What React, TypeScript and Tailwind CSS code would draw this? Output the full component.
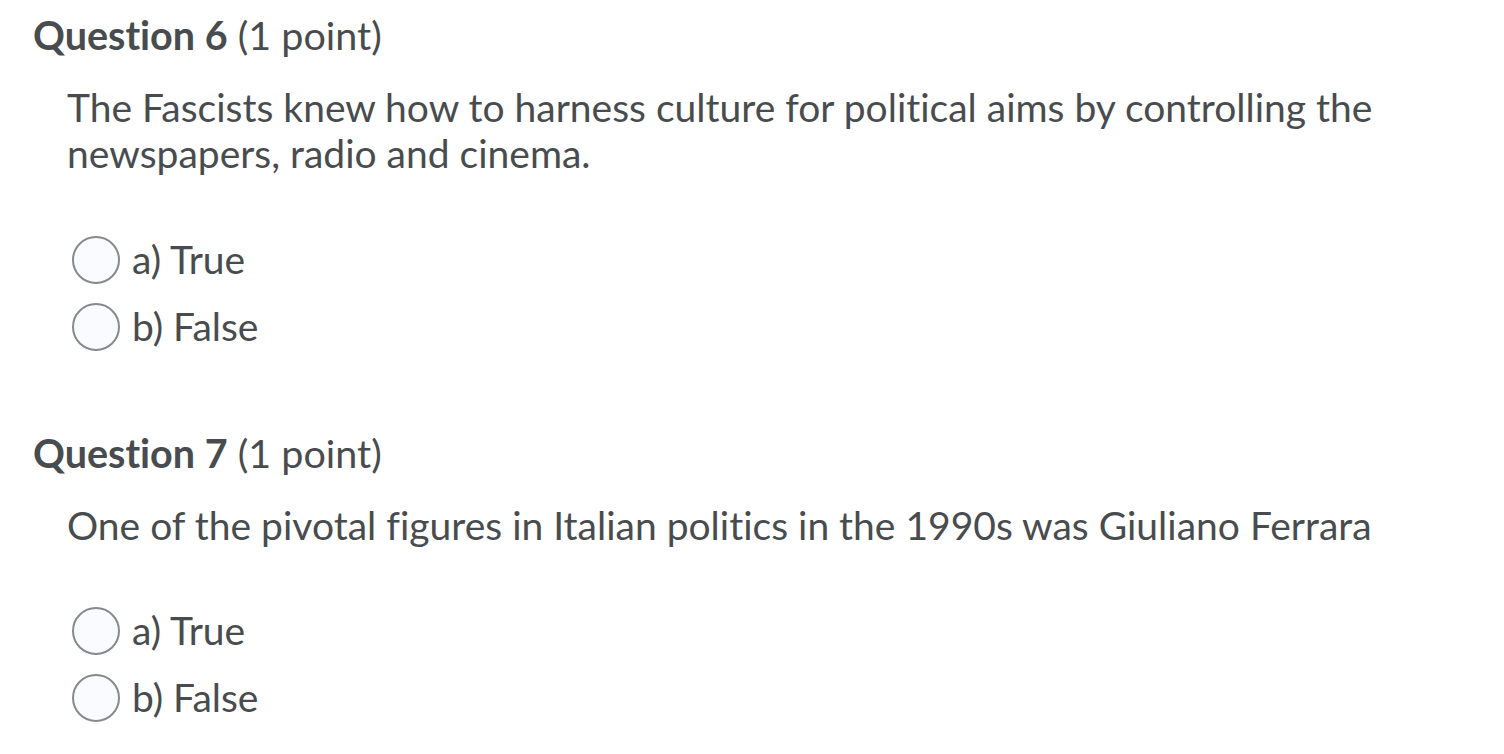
const questions = [
  {
    n: 6,
    text: 'The Fascists knew how to harness culture for political aims by controlling the newspapers, radio and cinema.',
    gap: 'mt-[50px]',
  },
  {
    n: 7,
    text: 'One of the pivotal figures in Italian politics in the 1990s was Giuliano Ferrara',
    gap: 'mt-[49px]',
  },
];

function Radio({ label }: { label: string }) {
  return (
    <label className="flex items-center h-[67px]">
      <span className="w-[48px] h-[48px] rounded-full border-2 border-[#868a8d] bg-[#f9fbff] shrink-0" />
      <span className="ml-[12px] text-[39px]">{label}</span>
    </label>
  );
}

export default function App() {
  return (
    <div
      className="w-[1504px] h-[754px] bg-white text-[#494c4e] overflow-hidden [font-variant-ligatures:none]"
      style={{ fontFamily: 'Lato, sans-serif' }}
    >
      {questions.map((q) => (
        <div key={q.n} className="pl-[33px] pt-[10px] pb-[58px]">
          <h2 className="text-[39.5px] leading-[50px]">
            <span className="font-bold">Question {q.n}</span> (1 point)
          </h2>
          <p className="mt-[24px] pl-[34px] pr-[100px] text-[39px] leading-[46px]">{q.text}</p>
          <div className={`${q.gap} pl-[39px]`}>
            <Radio label="a) True" />
            <Radio label="b) False" />
          </div>
        </div>
      ))}
    </div>
  );
}
